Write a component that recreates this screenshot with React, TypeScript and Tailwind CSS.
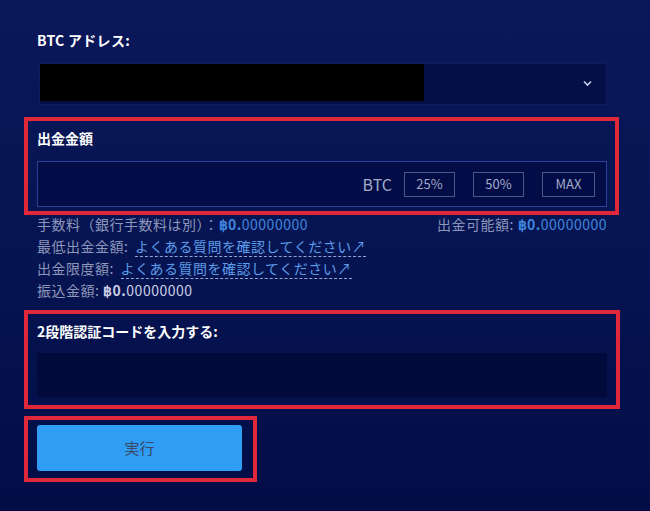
import React from 'react';

const FONT = "font-['Noto_Sans_CJK_JP','Noto_Sans','Liberation_Sans',sans-serif]";

const Amount: React.FC<{ dim?: boolean }> = ({ dim }) => (
  <span className={dim ? 'text-[#c9cfe6]' : 'text-[#3f86df]'}>
    <span className="font-bold">฿0.</span>
    <span>00000000</span>
  </span>
);

const FaqLink: React.FC = () => (
  <span className="ml-[3px] text-[#5d9ce8] border-b border-dashed border-[#8fa6d6] leading-[18px]">
    よくある質問を確認してください↗
  </span>
);

const App: React.FC = () => {
  return (
    <div className={`w-[650px] h-[511px] overflow-hidden bg-gradient-to-b from-[#0a185a] via-[#061452] to-[#020d46] ${FONT}`}>
      {/* BTC address */}
      <div className="pl-[37px] pt-[30px] text-[14px] leading-[20px] font-semibold text-white tracking-[0.3px]">BTC アドレス:</div>
      <div className="ml-[39px] mt-[13px] w-[568px] h-[42px] bg-[#040f48] border border-[#0f1c5c] flex items-start relative">
        <div className="w-[384px] h-[37px] bg-black" />
        <svg className="absolute left-[543px] top-[16px]" width="9" height="7" viewBox="0 0 9 7">
          <path d="M1 1.5 L4.5 5 L8 1.5" fill="none" stroke="#c9d0ea" strokeWidth="1.6" />
        </svg>
      </div>

      {/* Amount */}
      <div className="ml-[24px] mt-[12px] w-[595px] h-[98px] border-4 border-[#e0283a] pl-[9px] pr-[8px] pt-[7px]">
        <div className="text-[14px] leading-[20px] font-semibold text-white">出金金額</div>
        <div className="mt-[13px] h-[46px] border border-[#2e3f98] bg-[#020c46] flex items-center justify-end pr-[11px]">
          <span className="text-[16px] text-[#a3abc8] mr-[12px]">BTC</span>
          <button className="w-[51px] h-[25px] border border-[#4b5685] text-[13px] text-[#a3abc8]">25%</button>
          <button className="ml-[18px] w-[51px] h-[25px] border border-[#4b5685] text-[13px] text-[#a3abc8]">50%</button>
          <button className="ml-[18px] w-[53px] h-[25px] border border-[#4b5685] text-[13px] text-[#a3abc8]">MAX</button>
        </div>
      </div>

      {/* Info */}
      <div className="pl-[37px] pr-[43px] mt-[-2px] text-[14px] text-[#8e97ba] tracking-[0.5px]">
        <div className="h-[22px] leading-[22px] flex justify-between">
          <span>手数料（銀行手数料は別）：<Amount /></span>
          <span>出金可能額: <Amount /></span>
        </div>
        <div className="h-[22px] leading-[22px]">最低出金金額: <FaqLink /></div>
        <div className="h-[22px] leading-[22px]">出金限度額: <FaqLink /></div>
        <div className="h-[22px] leading-[22px]">振込金額: <Amount dim /></div>
      </div>

      {/* 2FA */}
      <div className="ml-[24px] mt-[9px] w-[596px] h-[99px] border-4 border-[#e0283a] pl-[9px] pr-[9px] pt-[7px]">
        <div className="text-[14px] leading-[20px] font-semibold text-white">2段階認証コードを入力する:</div>
        <div className="mt-[12px] h-[44px] bg-[#020a3c]" />
      </div>

      {/* Submit */}
      <div className="ml-[24px] mt-[7px] w-[233px] h-[66px] border-4 border-[#e0283a] pl-[9px] pt-[5px]">
        <button className="w-[205px] h-[46px] rounded-[3px] bg-[#2e9df3] text-[15px] text-[#3b4866]">実行</button>
      </div>
    </div>
  );
};

export default App;
